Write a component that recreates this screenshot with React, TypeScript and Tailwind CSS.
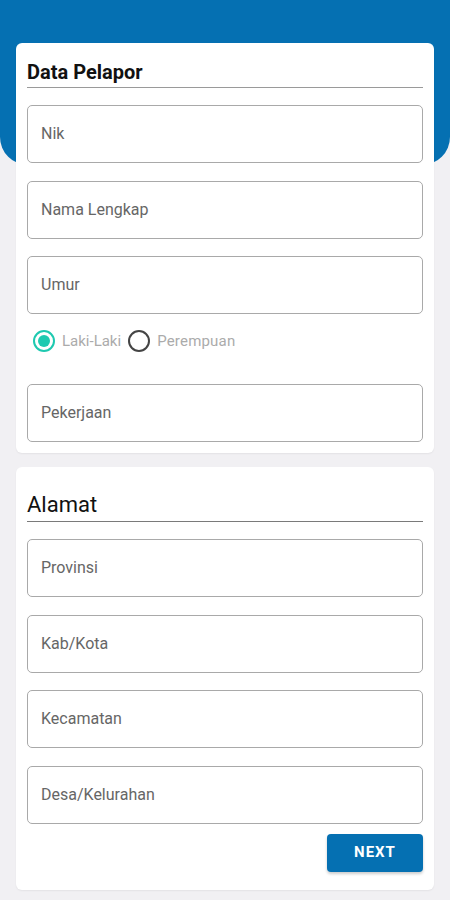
import React from "react";

function Field({ label }: { label: string }) {
  return (
    <div className="h-[58px] rounded-[5px] border border-[#a9a9a9] flex items-center px-[13px]">
      <span className="text-[16px] text-[#666]">{label}</span>
    </div>
  );
}

export default function App() {
  return (
    <div
      className="relative w-[450px] min-h-[900px] bg-[#f1f0f3]"
      style={{ fontFamily: "Roboto, 'Noto Sans', sans-serif" }}
    >
      <div className="h-[165px] bg-[#0570b2] rounded-b-[28px]" />
      <div className="relative -mt-[122px] px-4 flex flex-col gap-[14px] pb-[10px]">
        <div className="bg-white rounded-[6px] shadow-[0_1px_2px_rgba(0,0,0,0.06)] px-[11px] pt-[15px] pb-[11px]">
          <div className="text-[20px] font-bold text-[#111] leading-[28px]">Data Pelapor</div>
          <div className="h-px bg-[#9a9a9a] mt-[1px]" />
          <div className="mt-[17px] flex flex-col gap-[17.5px]">
            <Field label="Nik" />
            <Field label="Nama Lengkap" />
            <Field label="Umur" />
          </div>
          <div className="h-[55px] flex items-start pt-[16px] pl-[6px]">
            <div className="flex items-center gap-[7px]">
              <span className="w-[22px] h-[22px] rounded-full border-2 border-[#1ec9b0] flex items-center justify-center">
                <span className="w-[12px] h-[12px] rounded-full bg-[#1ec9b0]" />
              </span>
              <span className="text-[15px] text-[#ababab]">Laki-Laki</span>
            </div>
            <div className="flex items-center gap-[7px] ml-[7px]">
              <span className="w-[22px] h-[22px] rounded-full border-2 border-[#444]" />
              <span className="text-[15px] text-[#ababab] tracking-[0.2px]">Perempuan</span>
            </div>
          </div>
          <div className="mt-[15px]">
            <Field label="Pekerjaan" />
          </div>
        </div>

        <div className="bg-white rounded-[6px] shadow-[0_1px_2px_rgba(0,0,0,0.06)] px-[11px] pt-[24px] pb-[18px]">
          <div className="text-[22px] text-[#111] leading-[28px]">Alamat</div>
          <div className="h-px bg-[#7a7a7a] mt-[2px]" />
          <div className="mt-[17px] flex flex-col gap-[17.5px]">
            <Field label="Provinsi" />
            <Field label="Kab/Kota" />
            <Field label="Kecamatan" />
            <Field label="Desa/Kelurahan" />
          </div>
          <div className="flex justify-end mt-[10px]">
            <button className="w-[96px] h-[38px] rounded-[4px] bg-[#0570b2] text-white font-bold text-[15px] tracking-[1px] shadow-[0_2px_3px_rgba(0,0,0,0.2)]">
              NEXT
            </button>
          </div>
        </div>
      </div>
    </div>
  );
}
